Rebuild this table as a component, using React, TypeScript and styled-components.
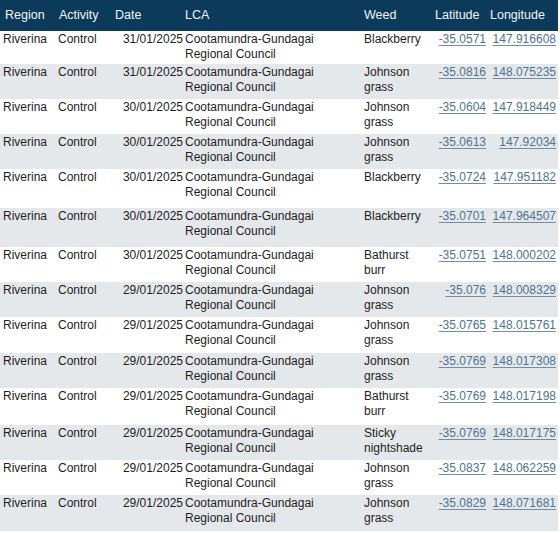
import React from "react";
import styled, { createGlobalStyle } from "styled-components";

const Global = createGlobalStyle`
  html, body { margin: 0; padding: 0; background: #ffffff; }
  body { font-family: "Liberation Sans", Arial, sans-serif; }
`;

const Table = styled.table`
  width: 558px;
  border-collapse: collapse;
  table-layout: fixed;
  font-family: "Liberation Sans", Arial, sans-serif;
  font-size: 12px;
  color: #1e1e1e;
`;

const HeadRow = styled.tr`
  background: #0c3a5b;
  height: 31px;
`;

const HeadCell = styled.th<{ $pl?: number }>`
  font-weight: normal;
  font-size: 12.5px;
  color: #f2f5f8;
  text-align: left;
  padding: 0 0 1px ${(p) => p.$pl ?? 3}px;
  vertical-align: middle;
  white-space: nowrap;
`;

const Row = styled.tr<{ $stripe: boolean }>`
  background: ${(p) => (p.$stripe ? "#e5e8eb" : "#ffffff")};
`;

const Cell = styled.td<{ $align?: "left" | "right"; $pl?: number; $pr?: number }>`
  vertical-align: top;
  text-align: ${(p) => p.$align ?? "left"};
  padding: 1px ${(p) => p.$pr ?? 2}px 0 ${(p) => p.$pl ?? 2}px;
  line-height: 15px;
`;

const Coord = styled.span`
  color: #4f7390;
  text-decoration: underline;
  text-decoration-color: #6f8ea5;
  text-underline-offset: 2px;
`;

type Rec = { date: string; weed: string; lat: string; lon: string; h: number };

const rows: Rec[] = [
  { date: "31/01/2025", weed: "Blackberry", lat: "-35.0571", lon: "147.916608", h: 33 },
  { date: "31/01/2025", weed: "Johnson grass", lat: "-35.0816", lon: "148.075235", h: 35 },
  { date: "30/01/2025", weed: "Johnson grass", lat: "-35.0604", lon: "147.918449", h: 35 },
  { date: "30/01/2025", weed: "Johnson grass", lat: "-35.0613", lon: "147.92034", h: 35 },
  { date: "30/01/2025", weed: "Blackberry", lat: "-35.0724", lon: "147.951182", h: 39 },
  { date: "30/01/2025", weed: "Blackberry", lat: "-35.0701", lon: "147.964507", h: 39 },
  { date: "30/01/2025", weed: "Bathurst burr", lat: "-35.0751", lon: "148.000202", h: 35 },
  { date: "29/01/2025", weed: "Johnson grass", lat: "-35.076", lon: "148.008329", h: 35 },
  { date: "29/01/2025", weed: "Johnson grass", lat: "-35.0765", lon: "148.015761", h: 36 },
  { date: "29/01/2025", weed: "Johnson grass", lat: "-35.0769", lon: "148.017308", h: 35 },
  { date: "29/01/2025", weed: "Bathurst burr", lat: "-35.0769", lon: "148.017198", h: 37 },
  { date: "29/01/2025", weed: "Sticky nightshade", lat: "-35.0769", lon: "148.017175", h: 35 },
  { date: "29/01/2025", weed: "Johnson grass", lat: "-35.0837", lon: "148.062259", h: 35 },
  { date: "29/01/2025", weed: "Johnson grass", lat: "-35.0829", lon: "148.071681", h: 36 },
];

export default function App() {
  return (
    <>
      <Global />
      <Table>
        <colgroup>
          <col style={{ width: 56 }} />
          <col style={{ width: 56 }} />
          <col style={{ width: 72 }} />
          <col style={{ width: 177 }} />
          <col style={{ width: 71 }} />
          <col style={{ width: 56 }} />
          <col style={{ width: 70 }} />
        </colgroup>
        <thead>
          <HeadRow>
            <HeadCell $pl={5}>Region</HeadCell>
            <HeadCell $pl={3}>Activity</HeadCell>
            <HeadCell $pl={3}>Date</HeadCell>
            <HeadCell $pl={1}>LCA</HeadCell>
            <HeadCell $pl={3}>Weed</HeadCell>
            <HeadCell $pl={3}>Latitude</HeadCell>
            <HeadCell $pl={2}>Longitude</HeadCell>
          </HeadRow>
        </thead>
        <tbody>
          {rows.map((r, i) => (
            <Row key={i} $stripe={i % 2 === 1} style={{ height: r.h }}>
              <Cell $pl={3}>Riverina</Cell>
              <Cell $pl={2}>Control</Cell>
              <Cell $align="right" $pr={1}>{r.date}</Cell>
              <Cell $pl={1}>
                Cootamundra-Gundagai
                <br />
                Regional Council
              </Cell>
              <Cell $pl={3}>{r.weed}</Cell>
              <Cell $align="right" $pr={2}>
                <Coord>{r.lat}</Coord>
              </Cell>
              <Cell $align="right" $pr={2}>
                <Coord>{r.lon}</Coord>
              </Cell>
            </Row>
          ))}
        </tbody>
      </Table>
    </>
  );
}
